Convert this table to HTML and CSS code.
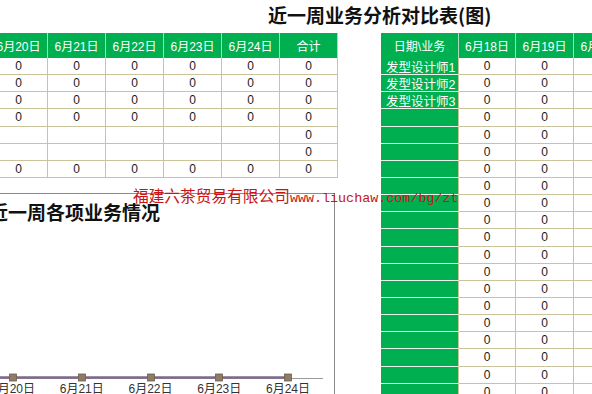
FILE: index.html
```html
<!DOCTYPE html>
<html lang="zh">
<head>
<meta charset="utf-8">
<title>近一周业务分析对比表(图)</title>
<link rel="stylesheet" href="styles.css">
</head>
<body>
<div class="sheet">
  <div class="title-row"><h1 class="title">近一周业务分析对比表(图)</h1></div>
  <div class="main">
    <div class="left">
      <div class="grid ltable">
        <div class="hd">6月20日</div><div class="hd">6月21日</div><div class="hd">6月22日</div><div class="hd">6月23日</div><div class="hd">6月24日</div><div class="hd">合计</div>
        <div class="c">0</div><div class="c">0</div><div class="c">0</div><div class="c">0</div><div class="c">0</div><div class="c">0</div>
        <div class="c">0</div><div class="c">0</div><div class="c">0</div><div class="c">0</div><div class="c">0</div><div class="c">0</div>
        <div class="c">0</div><div class="c">0</div><div class="c">0</div><div class="c">0</div><div class="c">0</div><div class="c">0</div>
        <div class="c">0</div><div class="c">0</div><div class="c">0</div><div class="c">0</div><div class="c">0</div><div class="c">0</div>
        <div class="c"></div><div class="c"></div><div class="c"></div><div class="c"></div><div class="c"></div><div class="c">0</div>
        <div class="c"></div><div class="c"></div><div class="c"></div><div class="c"></div><div class="c"></div><div class="c">0</div>
        <div class="c">0</div><div class="c">0</div><div class="c">0</div><div class="c">0</div><div class="c">0</div><div class="c">0</div>
      </div>
      <div class="chart">
        <div class="chart-title">近一周各项业务情况</div>
        <svg class="plot" width="345" height="152" viewBox="0 0 345 152">
          <line x1="0" y1="148.5" x2="333" y2="148.5" stroke="#9a9a9a" stroke-width="1"/>
          <line x1="0" y1="147.5" x2="298" y2="147.5" stroke="#7d6a8c" stroke-width="2.5"/>
          <g fill="#8e7d66" stroke="#6f604c" stroke-width="0.8">
            <rect x="19.5" y="144" width="7" height="7"/>
            <rect x="88.5" y="144" width="7" height="7"/>
            <rect x="157.5" y="144" width="7" height="7"/>
            <rect x="225.5" y="144" width="7" height="7"/>
            <rect x="294.5" y="144" width="7" height="7"/>
          </g>
        </svg>
        <div class="xlabels">
          <span>6月20日</span><span>6月21日</span><span>6月22日</span><span>6月23日</span><span>6月24日</span>
        </div>
      </div>
    </div>
    <div class="grid rtable">
      <div class="hd">日期\业务</div><div class="hd">6月18日</div><div class="hd">6月19日</div><div class="hd">6月20日</div>
      <div class="nm">发型设计师1</div><div class="c">0</div><div class="c">0</div><div class="c">0</div>
      <div class="nm">发型设计师2</div><div class="c">0</div><div class="c">0</div><div class="c">0</div>
      <div class="nm">发型设计师3</div><div class="c">0</div><div class="c">0</div><div class="c">0</div>
      <div class="nm"></div><div class="c">0</div><div class="c">0</div><div class="c">0</div>
      <div class="nm"></div><div class="c">0</div><div class="c">0</div><div class="c">0</div>
      <div class="nm"></div><div class="c">0</div><div class="c">0</div><div class="c">0</div>
      <div class="nm"></div><div class="c">0</div><div class="c">0</div><div class="c">0</div>
      <div class="nm"></div><div class="c">0</div><div class="c">0</div><div class="c">0</div>
      <div class="nm"></div><div class="c">0</div><div class="c">0</div><div class="c">0</div>
      <div class="nm"></div><div class="c">0</div><div class="c">0</div><div class="c">0</div>
      <div class="nm"></div><div class="c">0</div><div class="c">0</div><div class="c">0</div>
      <div class="nm"></div><div class="c">0</div><div class="c">0</div><div class="c">0</div>
      <div class="nm"></div><div class="c">0</div><div class="c">0</div><div class="c">0</div>
      <div class="nm"></div><div class="c">0</div><div class="c">0</div><div class="c">0</div>
      <div class="nm"></div><div class="c">0</div><div class="c">0</div><div class="c">0</div>
      <div class="nm"></div><div class="c">0</div><div class="c">0</div><div class="c">0</div>
      <div class="nm"></div><div class="c">0</div><div class="c">0</div><div class="c">0</div>
      <div class="nm"></div><div class="c">0</div><div class="c">0</div><div class="c">0</div>
      <div class="nm"></div><div class="c">0</div><div class="c">0</div><div class="c">0</div>
      <div class="nm"></div><div class="c">0</div><div class="c">0</div><div class="c">0</div>
    </div>
  </div>
  <div class="watermark">福建六茶贸易有限公司<span class="wm-en">www.liuchaw.com/bg/zt</span></div>
</div>
</body>
</html>
```

FILE: styles.css
```css
html, body {
  margin: 0;
  padding: 0;
  background: #ffffff;
}
body {
  width: 592px;
  height: 394px;
  overflow: hidden;
  font-family: "Liberation Sans", "Noto Sans CJK SC", sans-serif;
  color: #1a1a1a;
}
.sheet {
  position: relative;
  width: 592px;
  height: 394px;
  overflow: hidden;
  display: flex;
  flex-direction: column;
}
.title-row {
  height: 33px;
  flex: none;
  padding-left: 268px;
}
.title {
  margin: 0;
  font-family: "Noto Sans CJK SC", sans-serif;
  font-weight: 700;
  font-size: 19px;
  line-height: 30px;
  color: #111111;
  white-space: nowrap;
}
.main {
  display: flex;
  align-items: flex-start;
}
.left {
  flex: none;
  width: 348px;
  margin-left: -10px;
  display: flex;
  flex-direction: column;
}
.grid {
  display: grid;
  grid-template-rows: 25px;
  grid-auto-rows: 17.15px;
}
.ltable {
  grid-template-columns: repeat(6, 58px);
}
.rtable {
  flex: none;
  margin-left: 43px;
  grid-template-columns: 78px 57px 58px 58px;
}
.grid > div {
  box-sizing: border-box;
  display: flex;
  align-items: center;
  justify-content: center;
  font-size: 12px;
  white-space: nowrap;
  overflow: hidden;
}
.hd {
  background: #00b050;
  color: #ffffff;
  border-right: 1px solid #a6dcb8;
}
.c {
  background: #ffffff;
  border-right: 1px solid #c9c49c;
  border-bottom: 1px solid #c9c49c;
  color: #1a1a1a;
}
.grid > .nm {
  background: #00b050;
  color: #ffffff;
  justify-content: flex-start;
  padding-left: 5px;
  font-size: 12.5px;
  border-bottom: 1px solid #e8f6ec;
  border-right: 1px solid #c9c49c;
}
.chart {
  margin-top: 15px;
  width: 345px;
  height: 230px;
  box-sizing: border-box;
  border-top: 1px solid #8a8a8a;
  border-right: 1px solid #8a8a8a;
  display: flex;
  flex-direction: column;
}
.chart-title {
  height: 36px;
  line-height: 36px;
  font-family: "Noto Sans CJK SC", sans-serif;
  font-weight: 700;
  font-size: 19px;
  color: #111111;
  white-space: nowrap;
  margin-left: -1px;
}
.plot {
  display: block;
  flex: none;
}
.xlabels {
  display: flex;
  margin-left: -11.4px;
  height: 14px;
}
.xlabels span {
  flex: none;
  width: 68.75px;
  text-align: center;
  font-size: 12px;
  line-height: 14px;
  color: #333333;
  white-space: nowrap;
}
.watermark {
  position: absolute;
  left: 133px;
  top: 187px;
  font-family: "Noto Sans CJK SC", sans-serif;
  font-size: 15.7px;
  line-height: 18px;
  color: #c81414;
  white-space: nowrap;
}
.wm-en {
  font-family: "Liberation Mono", monospace;
  font-size: 13.4px;
}
```
